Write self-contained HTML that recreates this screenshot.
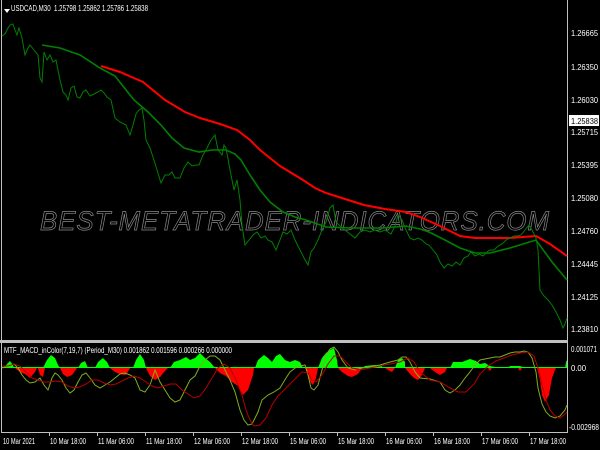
<!DOCTYPE html>
<html><head><meta charset="utf-8"><style>
html,body{margin:0;padding:0;background:#000;width:600px;height:450px;overflow:hidden}
svg{display:block}
text{font-family:"Liberation Sans",sans-serif;font-size:8px;fill:#fff}
</style></head><body>
<svg width="600" height="450" viewBox="0 0 600 450" xmlns="http://www.w3.org/2000/svg">
<rect width="600" height="450" fill="#000"/>
<line x1="1.5" y1="0" x2="1.5" y2="432" stroke="#c0c0c0" stroke-width="1"/>
<line x1="567.5" y1="0" x2="567.5" y2="432" stroke="#c0c0c0" stroke-width="1"/>
<rect x="0" y="340" width="568" height="3" fill="#c0c0c0"/>
<line x1="1" y1="432.5" x2="568" y2="432.5" stroke="#c0c0c0"/>
<polygon points="4,9 10,9 7,13" fill="#fff"/>
<text x="11" y="11" textLength="137" lengthAdjust="spacingAndGlyphs">USDCAD,M30&#160; 1.25798 1.25862 1.25786 1.25838</text>
<text x="40" y="230" style="font-size:27px;font-style:italic;fill:none;stroke:#8a8a8a;stroke-width:0.7;letter-spacing:1px" textLength="510" lengthAdjust="spacingAndGlyphs">BEST-METATRADER-INDICATORS.COM</text>
<polyline fill="none" stroke="#f00" stroke-width="2" points="101,66 120,72 143,82 165,100 185,112 200,118 220,124 237,130 250,140 260,150 280,166 303,180 315,188 326,193 345,199 364,205 385,209 406,212 420,217 440,226 460,236 475,238 490,238 510,238 536,236 550,244 567,256"/>
<polyline fill="none" stroke="#008000" stroke-width="1.6" points="42,45 60,48 80,55 100,68 115,76 134,100 148,112 161,125 172,138 184,148 199,152 212,150 226,150 235,154 241,160 250,175 260,190 270,202 283,212 295,217 306,220 326,227 350,228 383,228 406,226 420,229 429,232 445,240 460,248 475,253 490,253 510,248 536,240 552,262 567,280"/>
<polyline fill="none" stroke="#008000" stroke-width="1" points="2,36 5,34 8,28 10,25 13,24 15,30 17,35 19,28 22,38 25,55 28,48 30,45 34,50 38,55 40,78 42,82 44,52 47,60 50,55 53,62 56,60 60,80 63,92 66,95 68,100 71,88 74,86 77,97 80,98 83,92 86,90 90,96 94,94 98,92 101,90 104,93 107,97 111,100 115,118 120,122 126,125 128,130 130,135 133,125 136,114 139,110 142,108 144,120 146,140 150,148 153,157 157,170 161,183 165,175 169,175 172,172 175,178 180,178 184,168 188,162 192,166 196,165 199,165 203,155 207,148 211,140 215,135 218,150 222,155 224,145 226,148 230,170 234,190 237,180 240,200 242,225 245,245 249,240 253,235 257,232 261,238 265,236 268,240 272,242 276,250 280,240 283,232 287,234 291,230 295,240 300,250 304,258 308,265 311,252 314,248 318,240 322,230 326,222 330,208 333,205 336,222 340,226 345,230 350,234 355,238 360,232 365,230 370,232 375,230 380,232 385,230 391,234 395,226 398,215 402,220 406,230 410,238 414,240 418,238 422,240 426,244 429,245 433,250 437,255 440,262 444,268 448,264 452,266 456,262 460,265 464,258 468,256 471,252 475,256 479,254 483,256 487,252 490,250 494,250 498,246 502,244 506,240 510,238 514,236 518,236 521,235 525,230 529,225 532,230 536,238 538,250 540,290 544,296 548,300 552,305 556,312 560,320 563,328 565,324 567,318"/>
<g>
<text x="571" y="36" textLength="27" lengthAdjust="spacingAndGlyphs">1.26665</text>
<text x="571" y="70" textLength="27" lengthAdjust="spacingAndGlyphs">1.26350</text>
<text x="571" y="103" textLength="27" lengthAdjust="spacingAndGlyphs">1.26030</text>
<rect x="569" y="115" width="30" height="11" fill="#fff"/>
<text x="571" y="124" textLength="27" lengthAdjust="spacingAndGlyphs" style="fill:#000">1.25838</text>
<text x="571" y="135" textLength="27" lengthAdjust="spacingAndGlyphs">1.25715</text>
<text x="571" y="168" textLength="27" lengthAdjust="spacingAndGlyphs">1.25395</text>
<text x="571" y="201" textLength="27" lengthAdjust="spacingAndGlyphs">1.25080</text>
<text x="571" y="234" textLength="27" lengthAdjust="spacingAndGlyphs">1.24760</text>
<text x="571" y="267" textLength="27" lengthAdjust="spacingAndGlyphs">1.24445</text>
<text x="571" y="300" textLength="27" lengthAdjust="spacingAndGlyphs">1.24125</text>
<text x="571" y="332" textLength="27" lengthAdjust="spacingAndGlyphs">1.23810</text>
<text x="571" y="352" textLength="26" lengthAdjust="spacingAndGlyphs">0.001071</text>
<text x="571" y="371" textLength="15" lengthAdjust="spacingAndGlyphs">0.00</text>
<text x="569" y="430" textLength="30" lengthAdjust="spacingAndGlyphs">-0.002968</text>
</g>
<text x="4" y="353" textLength="228" lengthAdjust="spacingAndGlyphs">MTF_MACD_inColor(7,19,7) (Period_M30) 0.001862 0.001596 0.000266 0.000000</text>
<line x1="2" y1="367.5" x2="567" y2="367.5" stroke="#00ff00" stroke-width="1"/>
<g fill="#00ff00">
<polygon points="4,368 7,364 10,361 13,365 14,368"/>
<polygon points="43,368 47,360 51,355 55,358 58,365 60,368"/>
<polygon points="78,368 81,363 85,361 88,368"/>
<polygon points="95,368 98,362 103,358 107,362 110,368"/>
<polygon points="133,368 136,360 140,354 144,360 146,368"/>
<polygon points="170,368 174,362 180,360 186,357 190,360 195,358 200,353 205,358 210,362 215,368"/>
<polygon points="255,368 258,360 264,355 268,358 272,362 276,356 280,354 285,360 290,362 295,360 300,362 303,368"/>
<polygon points="318,368 322,358 326,353 330,350 334,348 337,360 338,368"/>
<polygon points="362,368 365,366 375,365 382,366 382,368"/>
<polygon points="395,368 398,360 402,358 405,362 405,368"/>
<polygon points="450,368 453,362 462,362 470,359 476,361 480,364 485,363 490,366 495,367 495,368"/>
<polygon points="508,368 510,366 520,366 525,368"/>
<polygon points="565,368 566,362 567,360 567,368"/>
</g>
<g fill="#ff0000">
<polygon points="15,368 20,372 25,374 30,378 35,372 37,368"/>
<polygon points="38,368 40,375 43,377 45,368"/>
<polygon points="60,368 63,374 67,377 72,375 77,368"/>
<polygon points="110,368 115,372 120,374 126,375 130,368"/>
<polygon points="146,368 150,376 155,380 160,377 164,372 168,368"/>
<polygon points="215,368 220,373 226,376 232,382 238,386 243,395 248,390 253,375 254,368"/>
<polygon points="305,368 308,375 311,383 313,385 316,378 318,368"/>
<polygon points="338,368 342,372 348,376 352,377 358,374 362,368"/>
<polygon points="385,368 388,370 392,372 395,368"/>
<polygon points="405,368 410,374 414,378 418,380 422,375 425,368"/>
<polygon points="430,368 435,372 440,375 445,372 447,368"/>
<polygon points="488,368 490,371 492,368"/>
<polygon points="518,368 520,371 522,368"/>
<polygon points="537,368 540,380 542,395 545,402 549,395 552,378 555,370 556,368"/>
</g>
<polyline fill="none" stroke="#7fae1e" stroke-width="1" points="2,368 8,366 14,364 18,368 22,375 26,380 30,383 35,382 40,378 44,385 48,390 52,378 55,373 58,375 62,380 66,388 70,393 74,390 78,382 82,375 86,373 90,378 95,385 100,388 105,385 110,382 115,378 120,374 125,373 130,375 135,378 140,390 145,392 150,385 155,370 160,382 165,390 170,398 175,402 180,400 185,390 190,380 195,376 198,370 200,366 205,360 210,356 215,356 220,360 225,370 230,380 235,392 240,410 244,420 248,425 252,424 258,412 262,400 268,395 274,392 280,388 286,378 290,372 295,368 300,366 305,365 308,375 311,388 314,390 318,385 322,370 326,355 330,349 334,347 338,352 342,360 348,368 355,370 362,368 370,367 380,365 390,362 398,360 402,357 406,357 410,362 415,372 420,378 430,379 440,382 445,390 450,393 455,390 460,385 465,378 470,372 475,365 480,360 485,359 490,358 495,357 500,357 505,355 510,353 515,352 520,352 524,351 528,352 532,358 536,372 538,388 542,404 546,412 550,416 555,418 560,416 565,410 567,405"/>
<polyline fill="none" stroke="#b80000" stroke-width="1" points="2,366 8,366 14,364 20,366 26,372 32,378 38,380 44,382 50,382 56,381 62,382 68,386 74,388 80,387 86,384 92,380 98,380 104,383 110,385 116,384 122,381 128,378 134,376 140,378 146,382 152,386 158,388 164,386 170,384 176,384 182,390 188,394 194,398 200,396 206,388 212,378 218,368 224,364 230,368 236,380 242,395 246,410 250,420 254,426 260,425 266,418 272,405 278,396 284,390 290,384 296,378 302,372 308,373 312,380 316,382 322,375 328,364 334,356 340,356 346,362 352,368 360,370 370,368 380,366 390,364 400,362 408,358 414,362 420,372 430,380 440,382 450,388 458,392 466,392 474,384 480,374 488,366 496,361 504,358 512,355 520,353 528,352 534,356 538,368 542,385 546,400 550,410 555,416 560,418 565,414 567,412"/>
<g stroke="#c0c0c0">
<line x1="49.5" y1="432" x2="49.5" y2="436"/><line x1="97.5" y1="432" x2="97.5" y2="436"/><line x1="145.5" y1="432" x2="145.5" y2="436"/><line x1="193.5" y1="432" x2="193.5" y2="436"/><line x1="241.5" y1="432" x2="241.5" y2="436"/><line x1="289.5" y1="432" x2="289.5" y2="436"/><line x1="337.5" y1="432" x2="337.5" y2="436"/><line x1="385.5" y1="432" x2="385.5" y2="436"/><line x1="433.5" y1="432" x2="433.5" y2="436"/><line x1="481.5" y1="432" x2="481.5" y2="436"/><line x1="529.5" y1="432" x2="529.5" y2="436"/>
</g>
<g>
<text x="3" y="444" textLength="32" lengthAdjust="spacingAndGlyphs">10 Mar 2021</text>
<text x="50" y="444" textLength="36" lengthAdjust="spacingAndGlyphs">10 Mar 18:00</text>
<text x="98" y="444" textLength="36" lengthAdjust="spacingAndGlyphs">11 Mar 06:00</text>
<text x="146" y="444" textLength="36" lengthAdjust="spacingAndGlyphs">11 Mar 18:00</text>
<text x="194" y="444" textLength="36" lengthAdjust="spacingAndGlyphs">12 Mar 06:00</text>
<text x="242" y="444" textLength="36" lengthAdjust="spacingAndGlyphs">12 Mar 18:00</text>
<text x="290" y="444" textLength="36" lengthAdjust="spacingAndGlyphs">15 Mar 06:00</text>
<text x="338" y="444" textLength="36" lengthAdjust="spacingAndGlyphs">15 Mar 18:00</text>
<text x="386" y="444" textLength="36" lengthAdjust="spacingAndGlyphs">16 Mar 06:00</text>
<text x="434" y="444" textLength="36" lengthAdjust="spacingAndGlyphs">16 Mar 18:00</text>
<text x="482" y="444" textLength="36" lengthAdjust="spacingAndGlyphs">17 Mar 06:00</text>
<text x="530" y="444" textLength="36" lengthAdjust="spacingAndGlyphs">17 Mar 18:00</text>
</g>
</svg>
</body></html>
